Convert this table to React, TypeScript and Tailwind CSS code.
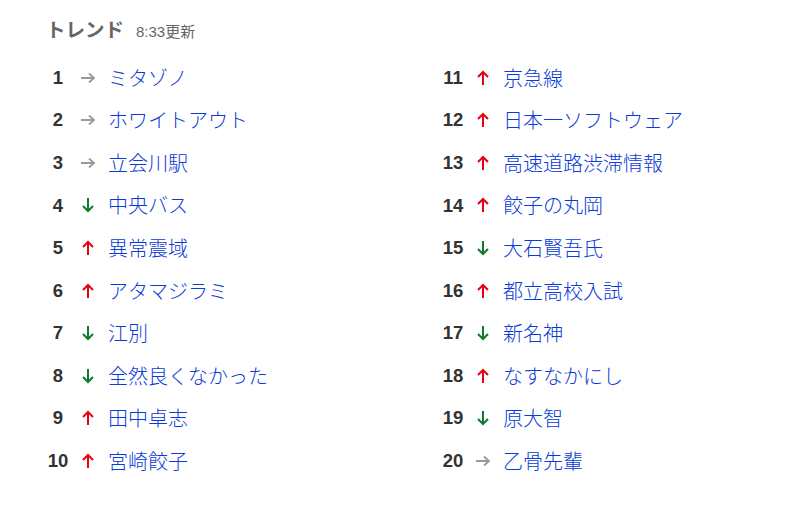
import React from "react";

type Dir = "up" | "down" | "flat";
const items: [number, Dir, string][] = [
  [1, "flat", "ミタゾノ"],
  [2, "flat", "ホワイトアウト"],
  [3, "flat", "立会川駅"],
  [4, "down", "中央バス"],
  [5, "up", "異常震域"],
  [6, "up", "アタマジラミ"],
  [7, "down", "江別"],
  [8, "down", "全然良くなかった"],
  [9, "up", "田中卓志"],
  [10, "up", "宮崎餃子"],
  [11, "up", "京急線"],
  [12, "up", "日本一ソフトウェア"],
  [13, "up", "高速道路渋滞情報"],
  [14, "up", "餃子の丸岡"],
  [15, "down", "大石賢吾氏"],
  [16, "up", "都立高校入試"],
  [17, "down", "新名神"],
  [18, "up", "なすなかにし"],
  [19, "down", "原大智"],
  [20, "flat", "乙骨先輩"],
];

function Arrow({ dir }: { dir: Dir }) {
  if (dir === "flat") {
    return (
      <svg width="16" height="12" viewBox="0 0 16 12" className="shrink-0">
        <path d="M1 6 H14 M9 1.5 L14 6 L9 10.5" fill="none" stroke="#999" strokeWidth="1.8" />
      </svg>
    );
  }
  const color = dir === "up" ? "#e60012" : "#0c7a2c";
  return (
    <svg width="16" height="16" viewBox="0 0 16 16" className="shrink-0">
      {dir === "up" ? (
        <path d="M8 15 V2 M3 7 L8 2 L13 7" fill="none" stroke={color} strokeWidth="2" />
      ) : (
        <path d="M8 1 V14 M3 9 L8 14 L13 9" fill="none" stroke={color} strokeWidth="2" />
      )}
    </svg>
  );
}

function Row({ n, dir, text }: { n: number; dir: Dir; text: string }) {
  return (
    <div className="flex h-[42.55px] items-center">
      <div className="w-[24px] text-center font-bold text-[18.5px] text-[#333] [font-family:'Liberation_Sans',Arial,sans-serif]">
        {n}
      </div>
      <div className="ml-[10px] flex w-[16px] justify-center">
        <Arrow dir={dir} />
      </div>
      <div className="ml-[12px] text-[20px] font-light leading-none text-[#0a3ad8] [font-family:'Noto_Sans_CJK_JP',sans-serif]">
        {text}
      </div>
    </div>
  );
}

export default function App() {
  return (
    <div className="h-[512px] w-[812px] bg-white pl-[46px] pt-[14px]">
      <div className="flex items-baseline">
        <span className="text-[19.5px] font-bold text-[#666] [font-family:'Noto_Sans_CJK_JP',sans-serif]">
          トレンド
        </span>
        <span className="ml-[12px] text-[15px] text-[#666] [font-family:'Liberation_Sans','Noto_Sans_CJK_JP',sans-serif]">
          8:33更新
        </span>
      </div>
      <div className="mt-[13px] grid grid-cols-[395px_395px]">
        <div className="flex flex-col">
          {items.slice(0, 10).map(([n, d, t]) => (
            <Row key={n} n={n} dir={d} text={t} />
          ))}
        </div>
        <div className="flex flex-col">
          {items.slice(10).map(([n, d, t]) => (
            <Row key={n} n={n} dir={d} text={t} />
          ))}
        </div>
      </div>
    </div>
  );
}
